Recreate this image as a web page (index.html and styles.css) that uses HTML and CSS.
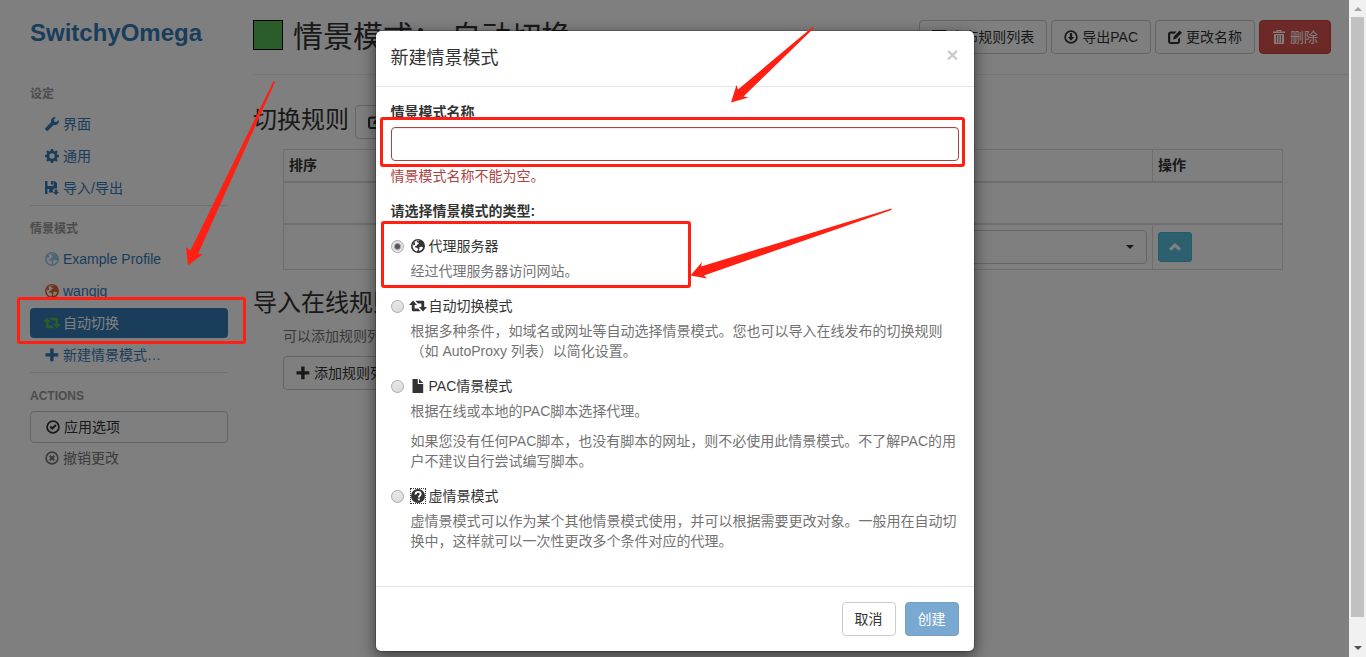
FILE: index.html
```html
<!DOCTYPE html>
<html lang="zh-CN">
<head>
  <meta charset="UTF-8">
  <meta name="viewport" content="width=device-width, initial-scale=1.0">
  <title>SwitchyOmega 选项</title>
  <link rel="stylesheet" href="styles.css">
</head>
<body>
  <svg class="sprite" aria-hidden="true">
    <symbol id="i-wrench" viewBox="0 0 14 14"><path d="M13.7 2.9 11.4 5.1 9.3 4.7 8.9 2.6 11.1.4C9.400-.2 7.700.3 6.800 1.500 6 2.600 5.900 3.900 6.300 5L.5 10.900a1.300 1.300 0 0 0 0 1.900l.7.7a1.300 1.300 0 0 0 1.900 0L8.900 7.700c1.300.5 2.700.3 3.800-.7 1.200-1.100 1.500-2.700 1-4.100z"/></symbol>
    <symbol id="i-cog" viewBox="0 0 14 14"><path fill-rule="evenodd" d="M5.900 0h2.200l.4 1.900 1.200.5L11.300 1.300l1.500 1.500-1.100 1.600.5 1.200 1.800.3v2.200l-1.800.4-.5 1.200 1.100 1.600-1.500 1.500-1.600-1.100-1.200.5-.4 1.800H5.900l-.4-1.800-1.200-.5-1.600 1.100-1.500-1.500 1.100-1.600-.5-1.200L0 8.100V5.900l1.800-.3.5-1.200-1.100-1.600 1.500-1.500 1.600 1.100 1.200-.5zM7 4.300a2.700 2.700 0 1 0 0 5.400 2.700 2.700 0 0 0 0-5.400z"/></symbol>
    <symbol id="i-save" viewBox="0 0 14 14"><path fill-rule="evenodd" d="M0 0h2.500v5h6V0h1.200L12 2.300v5.200H8.500V9H7.300l1.300 2.500H4V8H2.500v5H0zM6 0h2v3.500H6zM9.700 8.500h2.600V11H14l-3 3-3-3h1.700z"/></symbol>
    <symbol id="i-globe" viewBox="0 0 14 14"><path fill-rule="evenodd" d="M7 0a7 7 0 1 0 0 14A7 7 0 0 0 7 0zM8.700 1.600 7.400 2.300 6 2 5.700 3.300l1.500.3.7 1.200-1.500.6-.7 1.400-1.600.3.200 1.300 1.800.4 1 1.100-.3 1.500-1 1.100C3.300 11.700 1.600 9.600 1.600 7c0-3 2.400-5.400 5.400-5.400.6 0 1.200 0 1.700 0zM8.300 8l2.200-.3 1.600.800c-.6 1.700-1.900 3-3.500 3.600l-.9-1.300.9-1.200zM3.400 2.700 2 5l.6 1.600 1.200-.8.300-1.400z"/></symbol>
    <symbol id="i-retweet" viewBox="0 0 18 14"><path d="M4 1.500 8 6H5.600v3.500h3.600l2.400 2.700H4A1.200 1.200 0 0 1 2.800 11V6H0zM6.400 1.800H14A1.200 1.200 0 0 1 15.200 3v5H18l-4 4.500L10 8h2.400V4.500H8.800z"/></symbol>
    <symbol id="i-plus" viewBox="0 0 14 14"><path d="M5.200.5h3.400v4.700h4.700v3.400H8.600v4.700H5.200V8.600H.5V5.200h4.700z"/></symbol>
    <symbol id="i-ok" viewBox="0 0 14 14"><circle cx="7" cy="7" r="5.900" fill="none" stroke="currentColor" stroke-width="1.700"/><path d="m3.400 7.200 1.500-1.500 1.400 1.400 2.800-2.800 1.500 1.500-4.300 4.300z"/></symbol>
    <symbol id="i-remove" viewBox="0 0 14 14"><circle cx="7" cy="7" r="5.900" fill="none" stroke="currentColor" stroke-width="1.600"/><path d="m4.700 4.700 4.600 4.600m0-4.600L4.700 9.300" stroke="currentColor" stroke-width="2"/></symbol>
    <symbol id="i-download" viewBox="0 0 14 14"><circle cx="7" cy="7" r="5.900" fill="none" stroke="currentColor" stroke-width="1.700"/><path d="M5.900 3h2.200v4h2L7 10.800 3.900 7h2z"/></symbol>
    <symbol id="i-edit" viewBox="0 0 14 14"><path d="M8.500 1.500H3a3 3 0 0 0-3 3V11a3 3 0 0 0 3 3h6.500a2.500 2.500 0 0 0 2.500-2.500V7.300l-2 2V12H2.200V3.700h4.500zM11.700.5 14 2.700 8 8.700 5 9.500l.8-3z"/></symbol>
    <symbol id="i-trash" viewBox="0 0 14 14"><path fill-rule="evenodd" d="M4.500 0h5v1.500H13V3H1V1.500h3.500zM5.500.9v.6h3V.9zM2 4h10v10H2zM4 5v8h.9V5zm2.500 0v8h.9V5zM9 5v8h.9V5z"/></symbol>
    <symbol id="i-up" viewBox="0 0 14 14"><path d="m7 3 6 5.600-2.200 2.200L7 7.200l-3.800 3.600L1 8.600z"/></symbol>
    <symbol id="i-file" viewBox="0 0 14 14"><path d="M1.500 0h5.300v5h5.400v9H1.500zM8 0l4.200 4H8z"/></symbol>
    <symbol id="i-question" viewBox="0 0 14 14"><circle cx="7" cy="7" r="7"/><path d="M4.500 5.500C4.600 3.700 5.600 2.900 7.100 2.900s2.600.8 2.600 2.200c0 1.700-1.900 1.800-1.900 3.300" fill="none" stroke="#fff" stroke-width="1.900"/><path fill="#fff" d="M6.800 9.500h2v1.900h-2z"/></symbol>
    <symbol id="i-list" viewBox="0 0 14 14"><path fill-rule="evenodd" d="M0 0h14v14H0zM1.500 3v9.500h11V3zM3 5h1.500v1.500H3zm3 0h5v1.500H6zM3 8.500h1.500V10H3zm3 0h5V10H6z"/></symbol>
  </svg>

  <div class="page">
    <div class="app">
      <aside class="sidebar">
        <h1><a href="#about">SwitchyOmega</a></h1>
        <nav>
          <h2 class="nav-header">设定</h2>
          <ul class="nav">
            <li><a href="#ui"><svg class="icon"><use href="#i-wrench"/></svg>界面</a></li>
            <li><a href="#general"><svg class="icon"><use href="#i-cog"/></svg>通用</a></li>
            <li><a href="#io"><svg class="icon"><use href="#i-save"/></svg>导入/导出</a></li>
          </ul>
          <h2 class="nav-header divided">情景模式</h2>
          <ul class="nav">
            <li><a href="#example"><svg class="icon c-example"><use href="#i-globe"/></svg>Example Profile</a></li>
            <li><a href="#wangjq"><svg class="icon c-wangjq"><use href="#i-globe"/></svg>wangjq</a></li>
            <li class="active"><a href="#auto"><svg class="icon wide c-auto"><use href="#i-retweet"/></svg>自动切换</a></li>
            <li><a href="#new"><svg class="icon"><use href="#i-plus"/></svg>新建情景模式…</a></li>
          </ul>
          <h2 class="nav-header divided">ACTIONS</h2>
          <button class="btn btn-apply" type="button"><svg class="icon"><use href="#i-ok"/></svg>应用选项</button>
          <ul class="nav">
            <li class="muted"><a href="#revert"><svg class="icon"><use href="#i-remove"/></svg>撤销更改</a></li>
          </ul>
        </nav>
      </aside>

      <main class="main">
        <header class="page-header">
          <span class="swatch"></span>
          <h2>情景模式： 自动切换</h2>
          <div class="tools">
            <button class="btn" type="button"><svg class="icon"><use href="#i-list"/></svg>发布规则列表</button>
            <button class="btn" type="button"><svg class="icon"><use href="#i-download"/></svg>导出PAC</button>
            <button class="btn" type="button"><svg class="icon"><use href="#i-edit"/></svg>更改名称</button>
            <button class="btn btn-danger" type="button"><svg class="icon"><use href="#i-trash"/></svg>删除</button>
          </div>
        </header>

        <section>
          <div class="section-title">
            <h3>切换规则</h3>
            <button class="btn" type="button"><svg class="icon"><use href="#i-edit"/></svg>编辑源代码</button>
          </div>
          <table class="rules">
            <colgroup>
              <col class="col-sort"><col class="col-type"><col><col class="col-profile"><col class="col-action">
            </colgroup>
            <thead>
              <tr><th>排序</th><th>条件类型</th><th>条件设置</th><th>情景模式</th><th>操作</th></tr>
            </thead>
            <tbody>
              <tr class="add-row"><td colspan="5"></td></tr>
            </tbody>
            <tbody>
              <tr>
                <td colspan="3"></td>
                <td>
                  <div class="select">
                    <select aria-label="默认情景模式"><option>直接连接</option></select>
                    <span class="caret"></span>
                  </div>
                </td>
                <td><button class="btn btn-info" type="button" aria-label="上移"><svg class="icon"><use href="#i-up"/></svg></button></td>
              </tr>
            </tbody>
          </table>
        </section>

        <section class="online">
          <h3>导入在线规则列表</h3>
          <p>可以添加规则列表。</p>
          <button class="btn" type="button"><svg class="icon"><use href="#i-plus"/></svg>添加规则列表</button>
        </section>
      </main>

      <div class="backdrop">
        <form class="modal" role="dialog" aria-labelledby="modalTitle">
          <div class="modal-header">
            <h4 id="modalTitle">新建情景模式</h4>
            <button class="close" type="button" aria-label="关闭">×</button>
          </div>
          <div class="modal-body">
            <div class="form-group">
              <label class="field-label" for="profileName">情景模式名称</label>
              <input class="form-control" type="text" id="profileName">
              <p class="error">情景模式名称不能为空。</p>
            </div>
            <fieldset>
              <legend>请选择情景模式的类型:</legend>
              <div class="radio">
                <input type="radio" name="type" id="typeFixed" checked>
                <label for="typeFixed"><svg class="icon"><use href="#i-globe"/></svg>代理服务器</label>
                <p>经过代理服务器访问网站。</p>
              </div>
              <div class="radio">
                <input type="radio" name="type" id="typeSwitch">
                <label for="typeSwitch"><svg class="icon wide"><use href="#i-retweet"/></svg>自动切换模式</label>
                <p>根据多种条件，如域名或网址等自动选择情景模式。您也可以导入在线发布的切换规则（如 AutoProxy 列表）以简化设置。</p>
              </div>
              <div class="radio">
                <input type="radio" name="type" id="typePac">
                <label for="typePac"><svg class="icon"><use href="#i-file"/></svg>PAC情景模式</label>
                <p>根据在线或本地的PAC脚本选择代理。</p>
                <p>如果您没有任何PAC脚本，也没有脚本的网址，则不必使用此情景模式。不了解PAC的用户不建议自行尝试编写脚本。</p>
              </div>
              <div class="radio">
                <input type="radio" name="type" id="typeVirtual">
                <label for="typeVirtual"><svg class="icon focused"><use href="#i-question"/></svg>虚情景模式</label>
                <p>虚情景模式可以作为某个其他情景模式使用，并可以根据需要更改对象。一般用在自动切换中，这样就可以一次性更改多个条件对应的代理。</p>
              </div>
            </fieldset>
          </div>
          <div class="modal-footer">
            <button class="btn" type="button">取消</button>
            <button class="btn btn-primary" type="submit" disabled>创建</button>
          </div>
        </form>
      </div>
    </div>

    <div class="scrollbar">
      <span class="arrow-up"></span>
      <span class="thumb"></span>
      <span class="arrow-down"></span>
    </div>
  </div>

  <!-- tutorial marks -->
  <svg class="marks" width="1366" height="657" viewBox="0 0 1366 657" aria-hidden="true">
    <g class="mark-box">
      <rect x="18.500" y="298.500" width="226" height="44" rx="1.500"/>
      <rect x="381.500" y="118.500" width="582" height="47" rx="1.500"/>
      <rect x="382.500" y="222.500" width="307" height="64" rx="1.500"/>
    </g>
    <g class="mark-arrow">
      <path d="M273.500 81 275 82 198 254 203 254 188 265.500 186 247 190.500 250.500z"/>
      <path d="M812.500 27 814 28 743.500 96.500 748.500 97.500 731 102.500 736.500 85 738 89.500z"/>
      <path d="M891.500 208.500V210L704 275.500 707 278.500 690.500 275.500 702 262 701 266.500z"/>
    </g>
  </svg>
</body>
</html>
```

FILE: styles.css
```css
* {
  box-sizing: border-box;
}

body {
  margin: 0;
  font-family: "Liberation Sans", "Noto Sans CJK SC", sans-serif;
  font-size: 14px;
  line-height: 20px;
  color: #333;
  background: #fff;
  text-spacing-trim: space-all;
}

h1, h2, h3, h4, p, ul, fieldset {
  margin: 0;
  padding: 0;
  font-weight: normal;
}

a {
  color: #337ab7;
  text-decoration: none;
}

.sprite {
  display: none;
}

.icon {
  width: 14px;
  height: 14px;
  flex: none;
  fill: currentColor;
}

.icon.wide {
  width: 18px;
  margin: 0 -2px;
}

.page {
  display: flex;
  height: 100vh;
  overflow: hidden;
}

.app {
  position: relative;
  display: flex;
  flex: 1;
  min-width: 0;
}

/* Sidebar */
.sidebar {
  width: 228px;
  flex: none;
  padding: 20px 0 0 30px;
}

.sidebar h1 {
  margin-bottom: 39px;
  font-size: 24px;
  font-weight: bold;
  line-height: 26px;
}

.nav-header {
  margin-bottom: 6px;
  font-size: 12px;
  font-weight: bold;
  line-height: 18px;
  color: #999;
}

.nav-header.divided {
  padding-top: 14px;
  border-top: 1px solid #e5e5e5;
}

.nav {
  list-style: none;
}

.nav li {
  margin-bottom: 2px;
}

.nav a {
  display: flex;
  align-items: center;
  gap: 4px;
  padding: 5px 15px;
  border-radius: 4px;
}

.nav .active a {
  color: #fff;
  background: #337ab7;
}

.nav .muted a {
  color: #777;
}

.nav .c-example {
  color: #99ccee;
}

.nav .c-wangjq {
  color: #dd6633;
}

.nav .c-auto {
  color: #55bb55;
}

/* Buttons */
.btn {
  display: inline-flex;
  align-items: center;
  justify-content: center;
  gap: 4px;
  height: 34px;
  padding: 0 12px;
  font: inherit;
  color: #333;
  background: #fff;
  border: 1px solid #ccc;
  border-radius: 4px;
  white-space: nowrap;
}

.btn-apply {
  width: 100%;
  height: 32px;
  padding: 0 15px;
  justify-content: flex-start;
}

.btn-danger {
  color: #fff;
  background: #d9534f;
  border-color: #d43f3a;
}

.btn-info {
  width: 34px;
  height: 30px;
  padding: 0;
  color: #fff;
  background: #5bc0de;
  border-color: #46b8da;
  border-radius: 3px;
}

.btn-primary {
  color: #fff;
  background: #337ab7;
  border-color: #2e6da4;
}

.btn:disabled {
  opacity: 0.65;
}

/* Main */
.main {
  flex: 1;
  min-width: 0;
  padding-left: 25px;
}

.page-header {
  display: flex;
  align-items: flex-start;
  height: 75px;
  margin-bottom: 30px;
  padding: 20px 18px 0 0;
  border-bottom: 1px solid #eee;
}

.page-header h2 {
  flex: 1;
  margin-left: 10px;
  font-size: 30px;
  line-height: 33px;
}

.swatch {
  width: 30px;
  height: 30px;
  background: #55bb55;
  border: 1px solid #000;
}

.tools {
  display: flex;
  gap: 4px;
}

.section-title {
  display: flex;
  align-items: flex-start;
  gap: 6px;
  margin-bottom: 10px;
}

h3 {
  font-size: 24px;
  line-height: 30px;
}

.rules {
  width: calc(100% - 96px);
  margin-left: 30px;
  table-layout: fixed;
  border-collapse: collapse;
  border: 1px solid #ddd;
}

.rules th,
.rules td {
  height: 32px;
  padding: 5px;
  text-align: left;
  border: 1px solid #ddd;
}

.rules thead th {
  border-bottom-width: 2px;
}

.rules tbody + tbody {
  border-top: 2px solid #ddd;
}

.rules .add-row td {
  height: 42px;
}

.col-sort {
  width: 120px;
}

.col-type {
  width: 150px;
}

.col-profile {
  width: 330px;
}

.col-action {
  width: 130px;
}

.select {
  position: relative;
}

.select select {
  display: block;
  appearance: none;
  width: 100%;
  height: 34px;
  padding: 0 12px;
  font: inherit;
  color: #333;
  background: #fff;
  border: 1px solid #ccc;
  border-radius: 4px;
}

.caret {
  position: absolute;
  top: 15px;
  right: 13px;
  border: 4px solid transparent;
  border-top-color: #333;
  border-bottom: 0;
}

.online {
  margin-top: 18px;
}

.online p {
  margin: 8px 0 10px 30px;
  color: #737373;
}

.online .btn {
  margin-left: 30px;
}

/* Modal */
.backdrop {
  position: absolute;
  inset: 0;
  padding: 30px 0;
  background: rgba(0, 0, 0, 0.5);
}

.modal {
  max-width: 600px;
  margin: 0 auto;
  background: #fff;
  background-clip: padding-box;
  border: 1px solid rgba(0, 0, 0, 0.2);
  border-radius: 6px;
  box-shadow: 0 5px 15px rgba(0, 0, 0, 0.5);
}

.modal-header {
  display: flex;
  justify-content: space-between;
  align-items: flex-start;
  padding: 15px;
  border-bottom: 1px solid #e5e5e5;
}

.modal-header h4 {
  font-size: 18px;
  line-height: 25px;
}

.close {
  padding: 0;
  font-family: inherit;
  font-size: 21px;
  font-weight: bold;
  line-height: 18px;
  color: #000;
  background: none;
  border: 0;
  opacity: 0.2;
}

.modal-body {
  padding: 15px 15px 20px;
}

.form-group {
  margin-bottom: 15px;
}

.field-label {
  display: block;
  margin-bottom: 5px;
  font-weight: bold;
}

.form-control {
  display: block;
  width: 100%;
  height: 34px;
  padding: 6px 12px;
  font: inherit;
  border: 1px solid #a94442;
  border-radius: 4px;
  box-shadow: inset 0 1px 1px rgba(0, 0, 0, 0.075);
}

.error {
  margin-top: 5px;
  color: #a94442;
}

fieldset {
  border: 0;
}

legend {
  padding: 0;
  font-weight: bold;
}

.radio {
  display: grid;
  grid-template-columns: 20px 1fr;
  align-items: center;
  margin: 15px 0;
}

.radio input {
  appearance: none;
  width: 13px;
  height: 13px;
  margin: 0;
  border: 1px solid #aaa;
  border-radius: 50%;
  background: linear-gradient(#e8e8e8, #dcdcdc);
}

.radio input:checked {
  background: radial-gradient(circle, #555 2px, #e4e4e4 4px);
}

.radio label {
  display: flex;
  align-items: center;
  gap: 4px;
}

.radio p {
  grid-column: 2;
  margin-top: 5px;
  color: #737373;
}

.radio p + p {
  margin-top: 10px;
}

.focused {
  outline: 1px dotted #333;
}

.modal-footer {
  display: flex;
  justify-content: flex-end;
  gap: 9px;
  padding: 15px;
  border-top: 1px solid #e5e5e5;
}

/* Scrollbar */
.scrollbar {
  display: flex;
  flex-direction: column;
  align-items: center;
  width: 17px;
  padding: 7px 0;
  background: #f1f1f1;
}

.thumb {
  flex: 1;
  width: 13px;
  margin: 6px 0 29px;
  background: #c1c1c1;
}

.arrow-up,
.arrow-down {
  border: 4px solid transparent;
}

.arrow-up {
  border-top: 0;
  border-bottom-color: #a3a3a3;
}

.arrow-down {
  border-bottom: 0;
  border-top-color: #505050;
}

/* Marks drawn over the page */
.marks {
  position: absolute;
  top: 0;
  left: 0;
  pointer-events: none;
}

.mark-box {
  fill: none;
  stroke: #ff2013;
  stroke-width: 3;
}

.mark-arrow {
  fill: #ff2013;
}
```
